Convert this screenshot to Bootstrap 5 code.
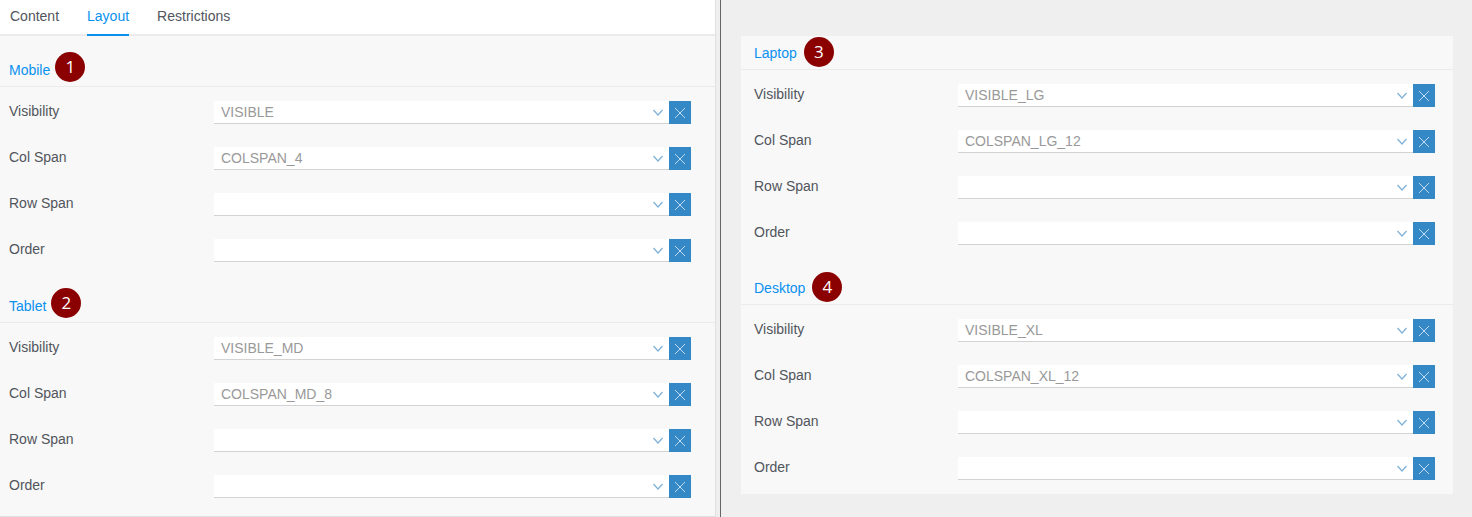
<!DOCTYPE html>
<html lang="en">
<head>
<meta charset="utf-8">
<meta name="viewport" content="width=device-width, initial-scale=1">
<title>Layout settings</title>
<link href="https://cdn.jsdelivr.net/npm/bootstrap@5.3.0/dist/css/bootstrap.min.css" rel="stylesheet">
<style>
  body { font: 14px/20px "Liberation Sans", Arial, sans-serif; color: #51555c; background: #efefef; }
  .workspace { display: grid; grid-template-columns: 721fr 751fr; }
  .side-left { padding-right: 4px; border-right: 1px solid #666; }
  .panel { background: #f8f8f8; }
  .side-left .frame { border: solid #e0e0e0; border-width: 0 1px 1px 0; }
  .side-left .panel { padding-bottom: 9px; }
  .side-right { padding: 36px 19px 0 20px; }
  .side-right .panel { padding-bottom: 5px; }
  .tabs { background: #fff; gap: 28px; padding: 0 10px; border-bottom: 2px solid #ebebeb; }
  .tabs .nav-link { padding: 6px 0 8px; margin-bottom: -2px; color: #51555c; border-bottom: 2px solid transparent; }
  .tabs .nav-link.active { color: #0a91f0; border-color: #0a91f0; }
  .section-head { height: 51px; padding: 0 9px; gap: 5px; border-bottom: 1px solid #ebebeb; }
  .side-left section + section .section-head { height: 52px; }
  .side-right .section-head { padding: 0 13px; gap: 7px; }
  .side-right .section-head.first { height: 34px; }
  .section-head h2 { font-size: 14px; line-height: 32px; font-weight: 400; color: #0a91f0; margin: 0; }
  .marker { width: 30px; height: 30px; margin-bottom: 4px; background: #8b0000; color: #fff; font: 17px/30px "Open Sans", sans-serif; text-align: center; }
  .side-right .marker { margin-bottom: 2px; }
  .setting { height: 46px; padding: 14px 24px 0 9px; }
  .side-right .setting { padding: 14px 18px 0 13px; }
  .setting label { width: 205px; flex: none; }
  .side-right .setting label { width: 204px; }
  .setting .form-select { height: 23px; padding: 0 24px 0 7px; font-size: 14px; line-height: 20px; color: #999; border: 0; border-bottom: 1px solid #d3d3d3; border-radius: 0;
    background: #fff url("data:image/svg+xml,%3Csvg xmlns='http://www.w3.org/2000/svg' viewBox='0 0 10 7'%3E%3Cpath d='M.5 1 5 6 9.5 1' fill='none' stroke='%237fb1d8' stroke-width='1.2'/%3E%3C/svg%3E") no-repeat right 6px center / 10px 7px; }
  .clear-btn { width: 22px; height: 23px; flex: none; background: #3488c5; border-radius: 0; }
  .clear-btn:hover { background: #2878b3; }
  .clear-btn svg { width: 12px; height: 12px; fill: none; stroke: #c2daed; }
</style>
</head>
<body>
<svg class="d-none" aria-hidden="true"><symbol id="cross" viewBox="0 0 12 12"><path d="M1 1 11 11M11 1 1 11"/></symbol></svg>
<main class="workspace min-vh-100">
  <div class="side-left">
   <div class="frame">
    <nav class="nav tabs" aria-label="Settings">
      <a class="nav-link" href="#content">Content</a>
      <a class="nav-link active" aria-current="page" href="#layout">Layout</a>
      <a class="nav-link" href="#restrictions">Restrictions</a>
    </nav>
    <div class="panel">
      <section>
        <div class="section-head d-flex align-items-end"><h2>Mobile</h2><span class="marker rounded-circle">1</span></div>
        <div class="setting d-flex"><label for="m-vis">Visibility</label><select class="form-select" id="m-vis"><option>VISIBLE</option></select><button type="button" class="clear-btn btn p-0 border-0 d-flex align-items-center justify-content-center" aria-label="Clear"><svg><use href="#cross"/></svg></button></div>
        <div class="setting d-flex"><label for="m-col">Col Span</label><select class="form-select" id="m-col"><option>COLSPAN_4</option></select><button type="button" class="clear-btn btn p-0 border-0 d-flex align-items-center justify-content-center" aria-label="Clear"><svg><use href="#cross"/></svg></button></div>
        <div class="setting d-flex"><label for="m-row">Row Span</label><select class="form-select" id="m-row"><option></option></select><button type="button" class="clear-btn btn p-0 border-0 d-flex align-items-center justify-content-center" aria-label="Clear"><svg><use href="#cross"/></svg></button></div>
        <div class="setting d-flex"><label for="m-ord">Order</label><select class="form-select" id="m-ord"><option></option></select><button type="button" class="clear-btn btn p-0 border-0 d-flex align-items-center justify-content-center" aria-label="Clear"><svg><use href="#cross"/></svg></button></div>
      </section>
      <section>
        <div class="section-head d-flex align-items-end"><h2>Tablet</h2><span class="marker rounded-circle">2</span></div>
        <div class="setting d-flex"><label for="t-vis">Visibility</label><select class="form-select" id="t-vis"><option>VISIBLE_MD</option></select><button type="button" class="clear-btn btn p-0 border-0 d-flex align-items-center justify-content-center" aria-label="Clear"><svg><use href="#cross"/></svg></button></div>
        <div class="setting d-flex"><label for="t-col">Col Span</label><select class="form-select" id="t-col"><option>COLSPAN_MD_8</option></select><button type="button" class="clear-btn btn p-0 border-0 d-flex align-items-center justify-content-center" aria-label="Clear"><svg><use href="#cross"/></svg></button></div>
        <div class="setting d-flex"><label for="t-row">Row Span</label><select class="form-select" id="t-row"><option></option></select><button type="button" class="clear-btn btn p-0 border-0 d-flex align-items-center justify-content-center" aria-label="Clear"><svg><use href="#cross"/></svg></button></div>
        <div class="setting d-flex"><label for="t-ord">Order</label><select class="form-select" id="t-ord"><option></option></select><button type="button" class="clear-btn btn p-0 border-0 d-flex align-items-center justify-content-center" aria-label="Clear"><svg><use href="#cross"/></svg></button></div>
      </section>
    </div>
   </div>
  </div>
  <div class="side-right">
    <div class="panel">
      <section>
        <div class="section-head first d-flex align-items-end"><h2>Laptop</h2><span class="marker rounded-circle">3</span></div>
        <div class="setting d-flex"><label for="l-vis">Visibility</label><select class="form-select" id="l-vis"><option>VISIBLE_LG</option></select><button type="button" class="clear-btn btn p-0 border-0 d-flex align-items-center justify-content-center" aria-label="Clear"><svg><use href="#cross"/></svg></button></div>
        <div class="setting d-flex"><label for="l-col">Col Span</label><select class="form-select" id="l-col"><option>COLSPAN_LG_12</option></select><button type="button" class="clear-btn btn p-0 border-0 d-flex align-items-center justify-content-center" aria-label="Clear"><svg><use href="#cross"/></svg></button></div>
        <div class="setting d-flex"><label for="l-row">Row Span</label><select class="form-select" id="l-row"><option></option></select><button type="button" class="clear-btn btn p-0 border-0 d-flex align-items-center justify-content-center" aria-label="Clear"><svg><use href="#cross"/></svg></button></div>
        <div class="setting d-flex"><label for="l-ord">Order</label><select class="form-select" id="l-ord"><option></option></select><button type="button" class="clear-btn btn p-0 border-0 d-flex align-items-center justify-content-center" aria-label="Clear"><svg><use href="#cross"/></svg></button></div>
      </section>
      <section>
        <div class="section-head d-flex align-items-end"><h2>Desktop</h2><span class="marker rounded-circle">4</span></div>
        <div class="setting d-flex"><label for="d-vis">Visibility</label><select class="form-select" id="d-vis"><option>VISIBLE_XL</option></select><button type="button" class="clear-btn btn p-0 border-0 d-flex align-items-center justify-content-center" aria-label="Clear"><svg><use href="#cross"/></svg></button></div>
        <div class="setting d-flex"><label for="d-col">Col Span</label><select class="form-select" id="d-col"><option>COLSPAN_XL_12</option></select><button type="button" class="clear-btn btn p-0 border-0 d-flex align-items-center justify-content-center" aria-label="Clear"><svg><use href="#cross"/></svg></button></div>
        <div class="setting d-flex"><label for="d-row">Row Span</label><select class="form-select" id="d-row"><option></option></select><button type="button" class="clear-btn btn p-0 border-0 d-flex align-items-center justify-content-center" aria-label="Clear"><svg><use href="#cross"/></svg></button></div>
        <div class="setting d-flex"><label for="d-ord">Order</label><select class="form-select" id="d-ord"><option></option></select><button type="button" class="clear-btn btn p-0 border-0 d-flex align-items-center justify-content-center" aria-label="Clear"><svg><use href="#cross"/></svg></button></div>
      </section>
    </div>
  </div>
</main>
<script src="https://cdn.jsdelivr.net/npm/bootstrap@5.3.0/dist/js/bootstrap.bundle.min.js"></script>
</body>
</html>
